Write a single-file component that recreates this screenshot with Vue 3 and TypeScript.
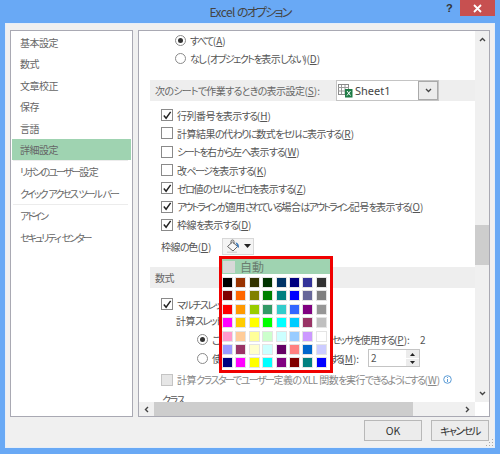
<script setup lang="ts">
import { h } from 'vue'

const navGroups = [
  ['基本設定', '数式', '文章校正', '保存', '言語', '詳細設定'],
  ['リボンのユーザー設定', 'クイック アクセス ツール バー'],
  ['アドイン', 'セキュリティ センター'],
]

const checks = [
  { on: true, label: '行列番号を表示する', key: 'H' },
  { on: false, label: '計算結果の代わりに数式をセルに表示する', key: 'R' },
  { on: false, label: 'シートを右から左へ表示する', key: 'W' },
  { on: false, label: '改ページを表示する', key: 'K' },
  { on: true, label: 'ゼロ値のセルにゼロを表示する', key: 'Z' },
  { on: true, label: 'アウトラインが適用されている場合はアウトライン記号を表示する', key: 'O' },
  { on: true, label: '枠線を表示する', key: 'D' },
]

const palette = [
  ['#000000', '#993300', '#333300', '#003300', '#003366', '#000080', '#333399', '#333333'],
  ['#800000', '#ff6600', '#808000', '#008000', '#008080', '#0000ff', '#666699', '#808080'],
  ['#ff0000', '#ff9900', '#99cc00', '#339966', '#33cccc', '#3366ff', '#800080', '#969696'],
  ['#ff00ff', '#ffcc00', '#ffff00', '#00ff00', '#00ffff', '#00ccff', '#993366', '#c0c0c0'],
  ['#ff99cc', '#ffcc99', '#ffff99', '#ccffcc', '#ccffff', '#99ccff', '#cc99ff', '#ffffff'],
  ['#9999ff', '#993366', '#ffffcc', '#ccffff', '#660066', '#ff8080', '#0066cc', '#ccccff'],
  ['#000080', '#ff00ff', '#ffff00', '#00ffff', '#800080', '#800000', '#008080', '#0000ff'],
]

// Meiryo UI squeezes kana much harder than kanji, so kana runs get their own span
const Jp = (props: { s: string }) =>
  (props.s.match(/[\u3040-\u30ff]+|[^\u3040-\u30ff]+/g) ?? []).map((run) =>
    h('span', { class: /[\u3040-\u30ff]/.test(run) ? 'kana' : 'kanji' }, run),
  )
</script>

<template>
  <div class="window">
    <header class="titlebar">
      <span class="title"><Jp s="Excel のオプション" /></span>
      <span class="help">?</span>
      <span class="close">
        <svg width="9" height="9" viewBox="0 0 9 9"><path d="M1 1l7 7M8 1l-7 7" stroke="#fff" stroke-width="1.8" /></svg>
      </span>
    </header>

    <div class="body">
      <div class="panes">
        <nav class="nav">
          <template v-for="(group, g) in navGroups" :key="g">
            <div v-if="g > 0" class="nav-sep"></div>
            <div
              v-for="item in group"
              :key="item"
              class="nav-item"
              :class="{ selected: item === '詳細設定' }"
            >
              <Jp :s="item" />
            </div>
          </template>
        </nav>

        <div class="main">
          <div class="content">
            <div class="content-inner">
              <div class="radio-row">
                <span class="radio on"></span><span><Jp s="すべて" />(<u>A</u>)</span>
              </div>
              <div class="radio-row">
                <span class="radio"></span><span><Jp s="なし (オブジェクトを表示しない)" />(<u>D</u>)</span>
              </div>

              <div class="section sheet-section">
                <span><Jp s="次のシートで作業するときの表示設定" />(<u>S</u>):</span>
                <div class="combo">
                  <div class="combo-value">
                    <svg width="15" height="14" viewBox="0 0 15 14">
                      <rect x="0.5" y="0.5" width="10" height="10" fill="#fff" stroke="#8a8a8a" />
                      <path d="M0 3.5h11M3.5 1v9M7 1v9M0 7h11" stroke="#9a9a9a" fill="none" />
                      <rect x="7" y="5" width="7.5" height="8.5" fill="#1e7b45" />
                      <path d="M9 7l3.5 4.5M12.5 7L9 11.5" stroke="#fff" />
                    </svg>
                    <span>Sheet1</span>
                  </div>
                  <div class="combo-btn">
                    <svg width="7" height="5" viewBox="0 0 7 5"><path d="M1 1l2.500 2.500L6 1" fill="none" stroke="#444" stroke-width="1.300" /></svg>
                  </div>
                </div>
              </div>

              <div class="check-list">
                <div v-for="c in checks" :key="c.key" class="check-row" :class="{ tight: c.key === 'O' }">
                  <span class="check">
                    <svg v-if="c.on" width="11" height="11" viewBox="0 0 11 11"><path d="M2 5.500l2.500 3L9.500 1.500" fill="none" stroke="#222" stroke-width="1.600" /></svg>
                  </span>
                  <span><Jp :s="c.label" />(<u>{{ c.key }}</u>)</span>
                </div>
              </div>

              <div class="grid-color">
                <span class="grid-label"><Jp s="枠線の色" />(<u>D</u>)</span>
                <div class="color-btn">
                  <svg width="15" height="14" viewBox="0 0 15 14">
                    <path d="M1.500 7.500L6.500 3l5 4.500-4.500 4.500z" fill="#f8f8f8" stroke="#666" />
                    <path d="M5 4.500V2.500a1.500 1.500 0 0 1 3 0V5" fill="none" stroke="#666" />
                    <path d="M9.500 3.500c2 0 3.500 1.500 3.500 4.500 0 1-1.500 1-1.500 0l-.5-1.500z" fill="#3a78b8" />
                    <rect x="1" y="12.500" width="10" height="1.500" fill="#d8d8d8" />
                  </svg>
                  <svg width="7" height="4" viewBox="0 0 7 4"><path d="M0 0h7L3.500 4z" fill="#222" /></svg>
                </div>
              </div>

              <div class="section formula-section"><Jp s="数式" /></div>

              <div class="check-row multi">
                <span class="check">
                  <svg width="11" height="11" viewBox="0 0 11 11"><path d="M2 5.500l2.500 3L9.500 1.500" fill="none" stroke="#222" stroke-width="1.600" /></svg>
                </span>
                <span><Jp s="マルチスレッド計算を行う" />(<u>U</u>)</span>
              </div>
              <div class="thread-label"><Jp s="計算スレッドの数" /></div>
              <div class="radio-row thread">
                <span class="radio on"></span>
                <span class="thread-text"><Jp s="このコンピューターのすべてのプロセッサを使用する" />(<u>P</u>):</span>
                <span>2</span>
              </div>
              <div class="radio-row thread manual">
                <span class="radio"></span>
                <span class="manual-text"><Jp s="使用するプロセッサの数を手動で設定する" />(<u>M</u>):</span>
                <div class="spin">
                  <span class="spin-value">2</span>
                  <div class="spin-btns">
                    <span><svg width="5" height="3" viewBox="0 0 5 3"><path d="M0 3h5L2.500 0z" fill="#222" /></svg></span>
                    <span><svg width="5" height="3" viewBox="0 0 5 3"><path d="M0 0h5L2.500 3z" fill="#222" /></svg></span>
                  </div>
                </div>
              </div>
              <div class="check-row disabled">
                <span class="check"></span>
                <span><Jp s="計算クラスターでユーザー定義の XLL 関数を実行できるようにする" />(<u>W</u>)</span>
                <svg class="info" width="9" height="9" viewBox="0 0 9 9">
                  <circle cx="4.500" cy="4.500" r="3.800" fill="none" stroke="#5b9bd5" />
                  <path d="M4.500 2v1M4.500 4v3" stroke="#5b9bd5" />
                </svg>
              </div>
              <div class="cluster"><Jp s="クラス" /></div>
            </div>
          </div>

          <div class="vscroll">
            <svg width="7" height="5" viewBox="0 0 7 5"><path d="M1 4l2.500-2.500L6 4" fill="none" stroke="#444" stroke-width="1.400" /></svg>
            <div class="vtrack"><div class="vthumb"></div></div>
            <svg width="7" height="5" viewBox="0 0 7 5"><path d="M1 1l2.500 2.500L6 1" fill="none" stroke="#444" stroke-width="1.400" /></svg>
          </div>
          <div class="hscroll">
            <svg width="5" height="7" viewBox="0 0 5 7"><path d="M4 1L1.500 3.500 4 6" fill="none" stroke="#444" stroke-width="1.400" /></svg>
            <div class="htrack"><div class="hthumb"></div></div>
            <svg width="5" height="7" viewBox="0 0 5 7"><path d="M1 1l2.500 2.500L1 6" fill="none" stroke="#444" stroke-width="1.400" /></svg>
          </div>
          <div class="corner"></div>
        </div>
      </div>

      <footer class="footer">
        <button class="btn">OK</button>
        <button class="btn"><Jp s="キャンセル" /></button>
      </footer>
      <svg class="grip" width="9" height="9" viewBox="0 0 9 9">
        <path d="M7 1h1v1H7zM4 4h1v1H4zM7 4h1v1H7zM1 7h1v1H1zM4 7h1v1H4zM7 7h1v1H7z" fill="#a8a8a8" />
      </svg>
    </div>

    <div class="popup">
      <div class="auto-row">
        <span class="auto-box"></span>
        <span>自動</span>
      </div>
      <div class="swatches">
        <template v-for="(row, r) in palette" :key="r">
          <span v-for="(color, c) in row" :key="c" class="swatch" :style="{ background: color }"></span>
        </template>
      </div>
    </div>
  </div>
</template>

<style scoped>
.window {
  position: relative;
  width: 500px;
  height: 454px;
  box-sizing: border-box;
  padding: 0 5px 6px;
  display: flex;
  flex-direction: column;
  background: #69a9f5;
  font-family: "Noto Sans CJK JP", "Noto Sans", sans-serif;
  font-size: 10px;
  font-feature-settings: "palt";
  color: #555;
  overflow: hidden;
}
.window :deep(.kana) {
  letter-spacing: -0.15em;
}
.window :deep(.kanji) {
  letter-spacing: -0.05em;
}
.nav :deep(.kana) {
  letter-spacing: -0.2em;
}
.sheet-section :deep(.kana) {
  letter-spacing: -0.08em;
}
.tight :deep(.kana) {
  letter-spacing: -0.19em;
}
.thread-text :deep(.kana) {
  letter-spacing: -0.18em;
}
.manual-text :deep(.kana) {
  letter-spacing: -0.34em;
}
.manual-text :deep(.kanji) {
  letter-spacing: -0.14em;
}
.titlebar {
  position: relative;
  height: 23px;
  flex: none;
  display: flex;
  justify-content: center;
  align-items: center;
}
.title {
  font-size: 12px;
  color: #444;
}
.help {
  position: absolute;
  left: 441px;
  top: 0;
  font: bold 11px "Liberation Sans", sans-serif;
  color: #333;
  line-height: 16px;
}
.close {
  position: absolute;
  left: 455px;
  top: 0;
  width: 35px;
  height: 16px;
  background: #c75050;
  display: flex;
  align-items: center;
  justify-content: center;
}
.body {
  position: relative;
  flex: 1;
  min-height: 0;
  display: flex;
  flex-direction: column;
  background: #f0f0f0;
  border: 1px solid #e6eef8;
  padding: 6px 4px 0;
}
.panes {
  display: flex;
  gap: 5px;
  height: 387px;
  flex: none;
}
.nav {
  width: 123px;
  box-sizing: border-box;
  border: 1px solid #a9a9b3;
  background: #fff;
  padding: 1px;
}
.nav-item {
  height: 21.4px;
  line-height: 21px;
  padding-left: 8px;
  white-space: nowrap;
  color: #666;
}
.nav-item.selected {
  background: #9fd3b1;
}
.nav-sep {
  height: 1px;
  margin: 0 3px 0 1px;
  background: #ececec;
}
.main {
  flex: 1;
  min-width: 0;
  box-sizing: border-box;
  border: 1px solid #a9a9b3;
  background: #fff;
  display: grid;
  grid-template-columns: 1fr 14px;
  grid-template-rows: 1fr 14px;
}
.content {
  overflow: hidden;
  min-width: 0;
  min-height: 0;
}
.content-inner {
  width: 325px;
  padding-left: 11px;
}
.radio-row {
  display: flex;
  align-items: center;
  height: 18px;
  padding-left: 25px;
  gap: 4px;
  white-space: nowrap;
}
.radio {
  width: 9px;
  height: 9px;
  flex: none;
  border: 1px solid #8a8a8a;
  border-radius: 50%;
  background: #fff;
  position: relative;
}
.radio.on::after {
  content: "";
  position: absolute;
  left: 2px;
  top: 2px;
  width: 5px;
  height: 5px;
  border-radius: 50%;
  background: #333;
}
.section {
  background: #eeeeee;
  padding-left: 5px;
  display: flex;
  align-items: center;
  white-space: nowrap;
  color: #666;
}
.sheet-section {
  height: 21px;
  margin-top: 13px;
  justify-content: space-between;
  padding-right: 36px;
}
.combo {
  width: 103px;
  height: 21px;
  box-sizing: border-box;
  border: 1px solid #c4c4c4;
  display: flex;
  background: #fff;
  flex: none;
}
.combo-value {
  flex: 1;
  display: flex;
  align-items: center;
  gap: 2px;
  padding-left: 1px;
  font-size: 11px;
  color: #444;
  font-family: "Noto Sans", sans-serif;
}
.combo-btn {
  width: 20px;
  box-sizing: border-box;
  border: 1px solid #aaa;
  background: #ececec;
  display: flex;
  align-items: center;
  justify-content: center;
}
.check-list {
  margin-top: 5px;
}
.check-row {
  display: flex;
  align-items: center;
  height: 18.3px;
  padding-left: 11px;
  gap: 4px;
  white-space: nowrap;
}
.check {
  width: 10px;
  height: 10px;
  flex: none;
  border: 1px solid #8a8a8a;
  background: #fff;
  display: flex;
  align-items: center;
  justify-content: center;
}
.grid-color {
  display: flex;
  align-items: center;
  height: 20px;
  margin-top: 2px;
  padding-left: 11px;
}
.grid-label {
  width: 61px;
}
.color-btn {
  width: 32px;
  height: 17px;
  box-sizing: border-box;
  border: 1px solid #d8d8d8;
  background: #f4f4f4;
  display: flex;
  align-items: center;
  justify-content: center;
  gap: 3px;
}
.formula-section {
  height: 21px;
  margin-top: 11px;
}
.multi {
  margin-top: 7px;
}
.thread-label {
  height: 18px;
  line-height: 18px;
  padding-left: 26px;
  margin-top: -1px;
}
.thread {
  padding-left: 47px;
}
.thread-text {
  width: 204px;
}
.manual {
  margin-top: 1px;
}
.manual-text {
  width: 152px;
}
.spin {
  width: 52px;
  height: 18px;
  box-sizing: border-box;
  border: 1px solid #c4c4c4;
  display: flex;
  flex: none;
  background: #fff;
}
.spin-value {
  flex: 1;
  padding-left: 2px;
  line-height: 15px;
}
.spin-btns {
  width: 13px;
  display: flex;
  flex-direction: column;
  gap: 1px;
}
.spin-btns span {
  flex: 1;
  background: #ececec;
  display: flex;
  align-items: center;
  justify-content: center;
}
.disabled {
  margin-top: 3px;
  color: #888;
}
.disabled .check {
  background: #e6e6e6;
  border-color: #c4c4c4;
}
.info {
  margin-left: -1px;
}
.cluster {
  margin-top: 4px;
  padding-left: 12px;
  line-height: 14px;
}
.vscroll {
  background: #f0f0f0;
  display: flex;
  flex-direction: column;
  align-items: center;
  padding: 6px 0;
}
.vtrack {
  flex: 1;
  width: 100%;
  display: flex;
  flex-direction: column;
  padding-top: 183px;
  padding-bottom: 126px;
  box-sizing: border-box;
}
.vthumb {
  flex: 1;
  background: #cdcdcd;
}
.hscroll {
  background: #f0f0f0;
  display: flex;
  align-items: center;
  padding: 0 5px;
}
.htrack {
  flex: 1;
  height: 100%;
  padding: 0 52px 0 5px;
  display: flex;
}
.hthumb {
  flex: 1;
  background: #cdcdcd;
}
.corner {
  background: #fff;
}
.footer {
  flex: 1;
  display: flex;
  justify-content: flex-end;
  align-items: flex-start;
  gap: 9px;
  padding: 3px 1px 0 0;
}
.btn {
  width: 58px;
  height: 21px;
  padding: 0;
  border: 1px solid #b8b8b8;
  background: #ececec;
  font-family: "Noto Sans CJK JP", "Noto Sans", sans-serif;
  font-size: 10.5px;
  font-feature-settings: "palt";
  color: #333;
}
.grip {
  position: absolute;
  right: 0;
  bottom: 0;
}
.popup {
  position: absolute;
  left: 219px;
  top: 256px;
  width: 114px;
  height: 117px;
  box-sizing: border-box;
  border: 3px solid #f00000;
  background: #fff;
  font-size: 12px;
  color: #6a7d70;
}
.auto-row {
  height: 15px;
  background: #9fd3b1;
  display: flex;
  align-items: center;
  gap: 5px;
}
.auto-box {
  width: 12px;
  height: 12px;
  margin-left: 1px;
  background: #d8d8d8;
}
.swatches {
  display: grid;
  grid-template-columns: repeat(8, 9px);
  grid-auto-rows: 9px;
  column-gap: 4.400px;
  row-gap: 4.400px;
  padding: 4px 0 0 1px;
}
.swatch {
  display: block;
  box-shadow: 0 0 0 1px #e4e4e4;
}
</style>
